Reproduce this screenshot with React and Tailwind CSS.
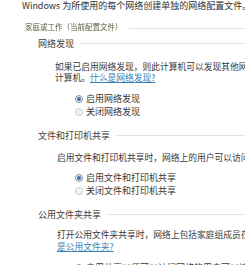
// App.jsx — Windows 高级共享设置 (network profile options) crop.

const Radio = ({ checked }) => (
  <span
    className={
      'inline-flex h-[8px] w-[8px] shrink-0 items-center justify-center rounded-full border ' +
      (checked ? 'border-[#8c9299] bg-[#eef1f4]' : 'border-[#c9cdd1] bg-[#f3f4f5]')
    }
  >
    {checked && <span className="h-[4px] w-[4px] rounded-full bg-[#3e6db3]" />}
  </span>
)

const Header = ({ children, className = '' }) => (
  <div className={'flex h-[11px] items-center pl-[38px] ' + className}>
    <span className="whitespace-nowrap text-[#3c3c3c]">{children}</span>
    <span className="ml-[6px] h-px flex-1 bg-[#dfe4e8]" />
  </div>
)

const Options = ({ items, className = '' }) => (
  <div className={'pl-[75px] ' + className}>
    {items.map((t, i) => (
      <div key={t} className="flex h-[13px] items-center gap-[3px] whitespace-nowrap">
        <Radio checked={i === 0} />
        <span>{t}</span>
      </div>
    ))}
  </div>
)

export default function App() {
  return (
    <div className="h-[265px] w-[245px] overflow-hidden bg-white font-['Noto_Sans_CJK_SC','Liberation_Sans',sans-serif] text-[9px] leading-[11px] text-[#383838]">
      <div className="h-[11px] whitespace-nowrap pl-[22px] text-[#2f2f2f]">
        Windows 为所使用的每个网络创建单独的网络配置文件。
      </div>

      <div className="mt-[10px] flex h-[11px] items-center pl-[25px]">
        <span className="whitespace-nowrap text-[7.5px] text-[#5a5a3c] blur-[0.4px]">
          家庭或工作（当前配置文件）
        </span>
        <span className="ml-[6px] mt-[3px] h-px flex-1 bg-[#dfe4e8]" />
      </div>

      <Header className="mt-[6px]">网络发现</Header>

      <div className="mt-[12px] whitespace-nowrap pl-[55px] text-[8.75px]">
        <div>如果已启用网络发现，则此计算机可以发现其他网络</div>
        <div>
          计算机。
          <span className="text-[#3b7fb6] underline">什么是网络发现?</span>
        </div>
      </div>

      <Options className="mt-[9px]" items={['启用网络发现', '关闭网络发现']} />

      <Header className="mt-[12px]">文件和打印机共享</Header>

      <div className="mt-[11px] whitespace-nowrap pl-[57px] text-[8.75px]">
        启用文件和打印机共享时，网络上的用户可以访问通过
      </div>

      <Options className="mt-[8px]" items={['启用文件和打印机共享', '关闭文件和打印机共享']} />

      <Header className="mt-[12px]">公用文件夹共享</Header>

      <div className="mt-[9px] whitespace-nowrap pl-[57px] text-[8.75px] leading-[12px]">
        <div>打开公用文件夹共享时，网络上包括家庭组成员在内</div>
        <div className="text-[#3b7fb6] underline">是公用文件夹?</div>
      </div>

      <Options className="mt-[8px]" items={['启用共享以便可以访问网络的用户可以读取']} />
    </div>
  )
}
